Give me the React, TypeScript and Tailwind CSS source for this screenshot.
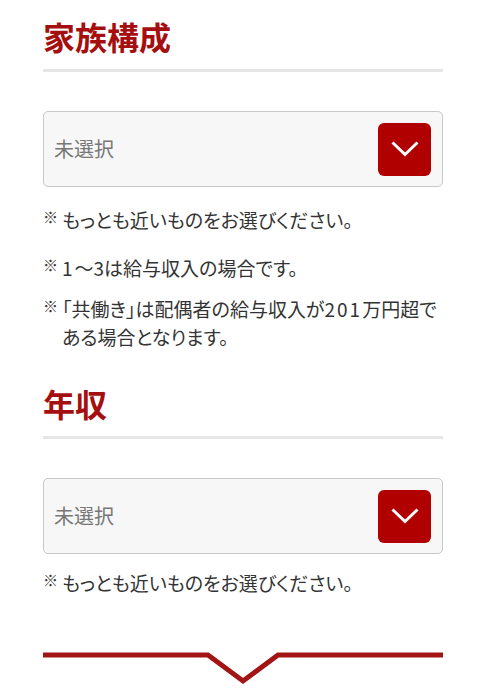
const jp = "font-['Noto_Sans_CJK_JP','Noto_Sans',sans-serif]";

function Heading({ children }: { children: React.ReactNode }) {
  return (
    <div>
      <h2 className="text-[32px] font-bold leading-[40px] text-[#a50f0f]">{children}</h2>
      <div className="mt-[13px] h-[3px] bg-[#e6e6e6]" />
    </div>
  );
}

function SelectBox() {
  return (
    <div className="mt-[39px] flex h-[76px] items-center justify-between rounded-[5px] border border-[#c8c8c8] bg-[#f7f7f7] pl-[10px] pr-[11px]">
      <span className="text-[20px] text-[#777]">未選択</span>
      <div className="flex h-[53px] w-[53px] items-center justify-center rounded-[6px] bg-[#b10000]">
        <svg width="28" height="16" viewBox="0 0 28 16" fill="none">
          <polyline points="1.5,1.5 14,13.5 26.5,1.5" stroke="white" strokeWidth="3" />
        </svg>
      </div>
    </div>
  );
}

function Note({ children, className = "" }: { children: React.ReactNode; className?: string }) {
  return (
    <div className={`flex text-[19px] leading-[28px] text-[#333] ${className}`}>
      <span className="w-[19px] shrink-0 pt-[3px] text-[15px] leading-[16px]">※</span>
      <p className="[font-feature-settings:'palt']">{children}</p>
    </div>
  );
}

export default function App() {
  return (
    <div className={`min-h-[700px] bg-white ${jp}`}>
      <div className="mx-[43px] w-[400px] pt-4">
        <Heading>家族構成</Heading>
        <SelectBox />
        <Note className="mt-[19px]">もっとも近いものをお選びください。</Note>
        <Note className="mt-[20px]">
          <span className="tracking-[2px]">1</span>〜3は給与収入の場合です。
        </Note>
        <Note className="mt-[13px]">
          「共働き」は配偶者の給与収入が<span className="tracking-[2px]">201</span>万円超で
          <br />
          ある場合となります。
        </Note>

        <div className="mt-[32px]">
          <Heading>年収</Heading>
        </div>
        <SelectBox />
        <Note className="mt-[15px]">もっとも近いものをお選びください。</Note>

        <svg className="mt-[53px] block" width="400" height="40" viewBox="0 0 400 40" fill="none">
          <polyline
            points="0,5 165,5 200,31 235,5 400,5"
            stroke="#a31515"
            strokeWidth="5"
            strokeLinejoin="miter"
          />
        </svg>
      </div>
    </div>
  );
}
